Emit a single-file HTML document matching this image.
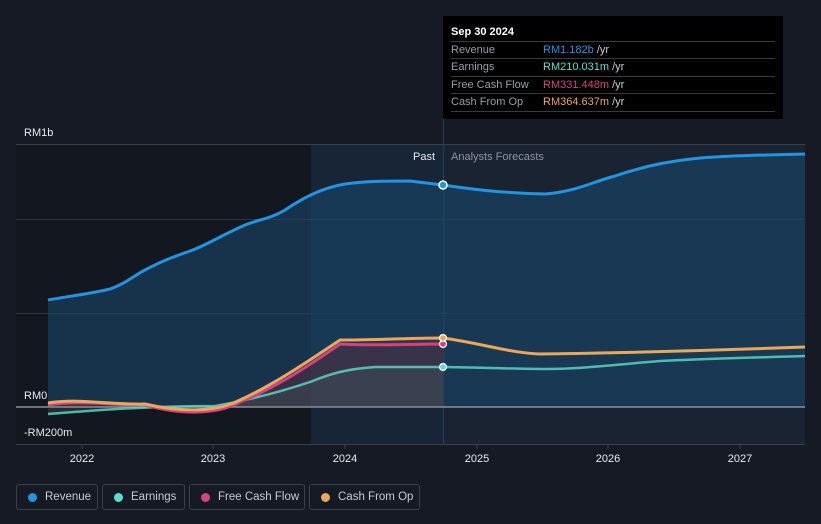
<!DOCTYPE html>
<html><head><style>
html,body{margin:0;background:#151a24;width:821px;height:524px;overflow:hidden;font-family:"Liberation Sans",sans-serif;}
svg text{font-family:"Liberation Sans",sans-serif;}
.lg{position:absolute;top:484px;height:26px;border:1px solid #3a3f48;border-radius:3px;box-sizing:border-box;color:#c8cbd0;font-size:11.5px;line-height:24px;padding-left:28px;white-space:nowrap;overflow:hidden}
.lg i{position:absolute;left:11px;top:8px;width:9px;height:9px;border-radius:50%}
</style></head><body>
<svg width="821" height="524" style="position:absolute;left:0;top:0">
<rect x="16" y="144" width="295" height="300" fill="#121720"/>
<rect x="311" y="144" width="133" height="300" fill="#172536"/>
<rect x="444" y="144" width="361" height="300" fill="#192332"/>
<line x1="16" y1="144.5" x2="805" y2="144.5" stroke="#3a414c"/>
<line x1="16" y1="219.5" x2="805" y2="219.5" stroke="#2c3440"/>
<line x1="16" y1="313.5" x2="805" y2="313.5" stroke="#2c3440"/>
<line x1="16" y1="444.5" x2="805" y2="444.5" stroke="#3a414c"/>
<line x1="443.5" y1="16" x2="443.5" y2="444" stroke="#2a3e55"/>
<path d="M48,300 C70,296 95,293 110,289 C125,284 135,275 145,270 C160,262 170,258 190,251 C205,246 220,236 245,225 C260,219 270,219 285,210 C300,200 320,188 345,184 C365,181 390,181 410,181 L443,185 C470,189 500,193 545,194 C575,192 595,181 615,176 C640,168 660,162 700,158 C740,155 770,155 805,154 L805,407 L48,407Z" fill="#1a4a70" fill-opacity="0.55"/>
<path d="M48,405 C80,400 110,405 145,405 C175,413 213,417 240,402 C275,388 310,365 340,344 L443,338 L443,407 L48,407Z" fill="#6b2a3a" fill-opacity="0.4"/>
<path d="M48,414 C100,410 150,406 215,406 C250,400 280,392 310,382 C330,374 345,369 375,367 L443,367 L443,407 L48,407Z" fill="#3a5a5a" fill-opacity="0.35"/>
<line x1="16" y1="407" x2="805" y2="407" stroke="#8a8f98" stroke-width="1.5"/>
<path d="M48,300 C70,296 95,293 110,289 C125,284 135,275 145,270 C160,262 170,258 190,251 C205,246 220,236 245,225 C260,219 270,219 285,210 C300,200 320,188 345,184 C365,181 390,181 410,181 L443,185 C470,189 500,193 545,194 C575,192 595,181 615,176 C640,168 660,162 700,158 C740,155 770,155 805,154" fill="none" stroke="#2394e0" stroke-width="3"/>
<path d="M48,414 C100,410 150,406 215,406 C250,400 280,392 310,382 C330,374 345,369 375,367 L443,367 C500,368 520,369 545,369 C580,369 600,366 660,361 C700,359 740,358 805,356" fill="none" stroke="#5fdccb" stroke-width="2.5" stroke-opacity="0.8"/>
<path d="M48,405 C80,400 110,405 145,405 C175,413 213,417 240,402 C275,388 310,365 340,344 C360,345 380,345 443,344" fill="none" stroke="#d0457f" stroke-width="3"/>
<path d="M48,403 C80,398 110,405 145,404 C175,411 213,414 240,400 C275,384 310,360 340,340 C380,340 410,338 443,338 C480,343 510,353 540,354 C610,353 700,351 805,347" fill="none" stroke="#eaa85a" stroke-width="3"/>
<circle cx="443" cy="185" r="4" fill="#2394e0" stroke="#fff" stroke-width="1.5"/>
<circle cx="443" cy="367" r="3.5" fill="#5fdccb" stroke="#fff" stroke-width="1.2"/>
<circle cx="443" cy="344" r="3.5" fill="#d0457f" stroke="#fff" stroke-width="1.2"/>
<circle cx="443" cy="338" r="3.5" fill="#eaa85a" stroke="#fff" stroke-width="1.2"/>
<text x="24" y="136" fill="#e8eaee" font-size="11">RM1b</text>
<text x="24" y="399" fill="#e8eaee" font-size="11">RM0</text>
<text x="24" y="436" fill="#e8eaee" font-size="11">-RM200m</text>
<text x="435" y="160" fill="#e8eaee" font-size="11" text-anchor="end">Past</text>
<text x="451" y="160" fill="#8f949c" font-size="11">Analysts Forecasts</text>
<g fill="#e8eaee" font-size="11" text-anchor="middle">
<text x="82" y="462">2022</text><text x="213" y="462">2023</text><text x="345" y="462">2024</text><text x="477" y="462">2025</text><text x="608" y="462">2026</text><text x="740" y="462">2027</text></g>
<g stroke="#3a414c"><line x1="82" y1="444" x2="82" y2="449"/><line x1="213" y1="444" x2="213" y2="449"/><line x1="345" y1="444" x2="345" y2="449"/><line x1="477" y1="444" x2="477" y2="449"/><line x1="608" y1="444" x2="608" y2="449"/><line x1="740" y1="444" x2="740" y2="449"/></g>
<rect x="443" y="16" width="340" height="103" fill="#000"/>
<text x="451" y="35" fill="#fff" font-size="11" font-weight="bold">Sep 30 2024</text>
<g stroke="#3a3a3a"><line x1="451" y1="41.5" x2="775" y2="41.5"/><line x1="451" y1="58.5" x2="775" y2="58.5"/><line x1="451" y1="76.5" x2="775" y2="76.5"/><line x1="451" y1="93.5" x2="775" y2="93.5"/><line x1="451" y1="111.5" x2="775" y2="111.5"/></g>
<g font-size="11" fill="#9a9ea5"><text x="451" y="53">Revenue</text><text x="451" y="70">Earnings</text><text x="451" y="88">Free Cash Flow</text><text x="451" y="105">Cash From Op</text></g>
<g font-size="11">
<text x="543" y="53"><tspan fill="#2394e0">RM1.182b</tspan><tspan fill="#c8cbd0"> /yr</tspan></text>
<text x="543" y="70"><tspan fill="#5fdccb">RM210.031m</tspan><tspan fill="#c8cbd0"> /yr</tspan></text>
<text x="543" y="88"><tspan fill="#d0457f">RM331.448m</tspan><tspan fill="#c8cbd0"> /yr</tspan></text>
<text x="543" y="105"><tspan fill="#eaa85a">RM364.637m</tspan><tspan fill="#c8cbd0"> /yr</tspan></text></g>
</svg>
<div class="lg" style="left:16px;width:82px"><i style="background:#2394e0"></i>Revenue</div>
<div class="lg" style="left:102px;width:83px"><i style="background:#5fdccb"></i>Earnings</div>
<div class="lg" style="left:189px;width:116px"><i style="background:#d0457f"></i>Free Cash Flow</div>
<div class="lg" style="left:309px;width:111px"><i style="background:#eaa85a"></i>Cash From Op</div>
</body></html>
